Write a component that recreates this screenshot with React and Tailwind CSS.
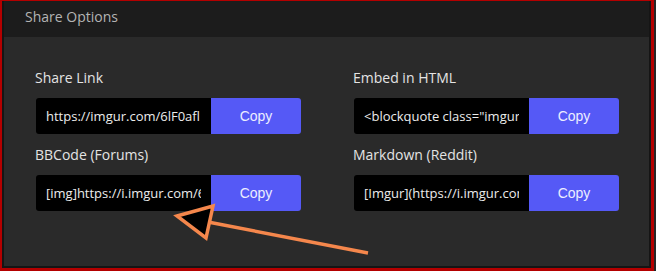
import React from "react";

const font = { fontFamily: '"Open Sans", "Liberation Sans", sans-serif' };

function Field({ label, value }) {
  return (
    <div className="flex flex-col">
      <div className="h-[20px] text-[14px] leading-[20px] text-[#e4e4e4] whitespace-nowrap">{label}</div>
      <div className="mt-[10px] ml-[1px] flex h-[36px] w-[265px]">
        <input
          readOnly
          value={value}
          className="h-full w-[175px] rounded-l-[3px] rounded-r-none bg-black px-[10px] text-[13px] leading-[18px] text-[#ececec] outline-none"
          style={font}
        />
        <div
          className="flex h-full w-[90px] items-center justify-center rounded-r-[3px] bg-[#5559f6] text-[14px] text-[#eceeff]"
          style={{ fontFamily: '"Liberation Sans", Arial, sans-serif' }}
        >
          Copy
        </div>
      </div>
    </div>
  );
}

export default function App() {
  return (
    <div className="relative flex h-[271px] w-[656px] overflow-hidden bg-[#262626]" style={font}>
      <div className="flex h-[271px] w-[654px] border-t border-b-[3px] border-l-2 border-r-[3px] border-[#b40000]">
        <div className="flex flex-1 flex-col border-x-2 border-b-2 border-[#151515] bg-[#2a2a2a]">
          <div className="h-[36px] bg-[#1c1c1c] pl-[21px] pt-[6px] text-[14px] leading-[20px] text-[#b4b4b4]">
            Share Options
          </div>
          <div className="grid grid-cols-[265px_265px] gap-x-[53px] gap-y-[11px] pl-[31px] pt-[31px]">
            <Field label="Share Link" value="https://imgur.com/6lF0afl" />
            <Field label="Embed in HTML" value={'<blockquote class="imgur-embed-pub"'} />
            <Field label="BBCode (Forums)" value="[img]https://i.imgur.com/6lF0afl.png[/img]" />
            <Field label="Markdown (Reddit)" value="[Imgur](https://i.imgur.com/6lF0afl.png)" />
          </div>
        </div>
      </div>
      <svg className="pointer-events-none absolute left-0 top-0" width="656" height="271" viewBox="0 0 656 271">
        <line x1="208" y1="222" x2="368" y2="253" stroke="#f5874c" strokeWidth="3.5" strokeLinecap="butt" />
        <polygon points="177,216 213,206 206,238" fill="#000" stroke="#f5874c" strokeWidth="3.5" strokeLinejoin="miter" />
      </svg>
    </div>
  );
}
